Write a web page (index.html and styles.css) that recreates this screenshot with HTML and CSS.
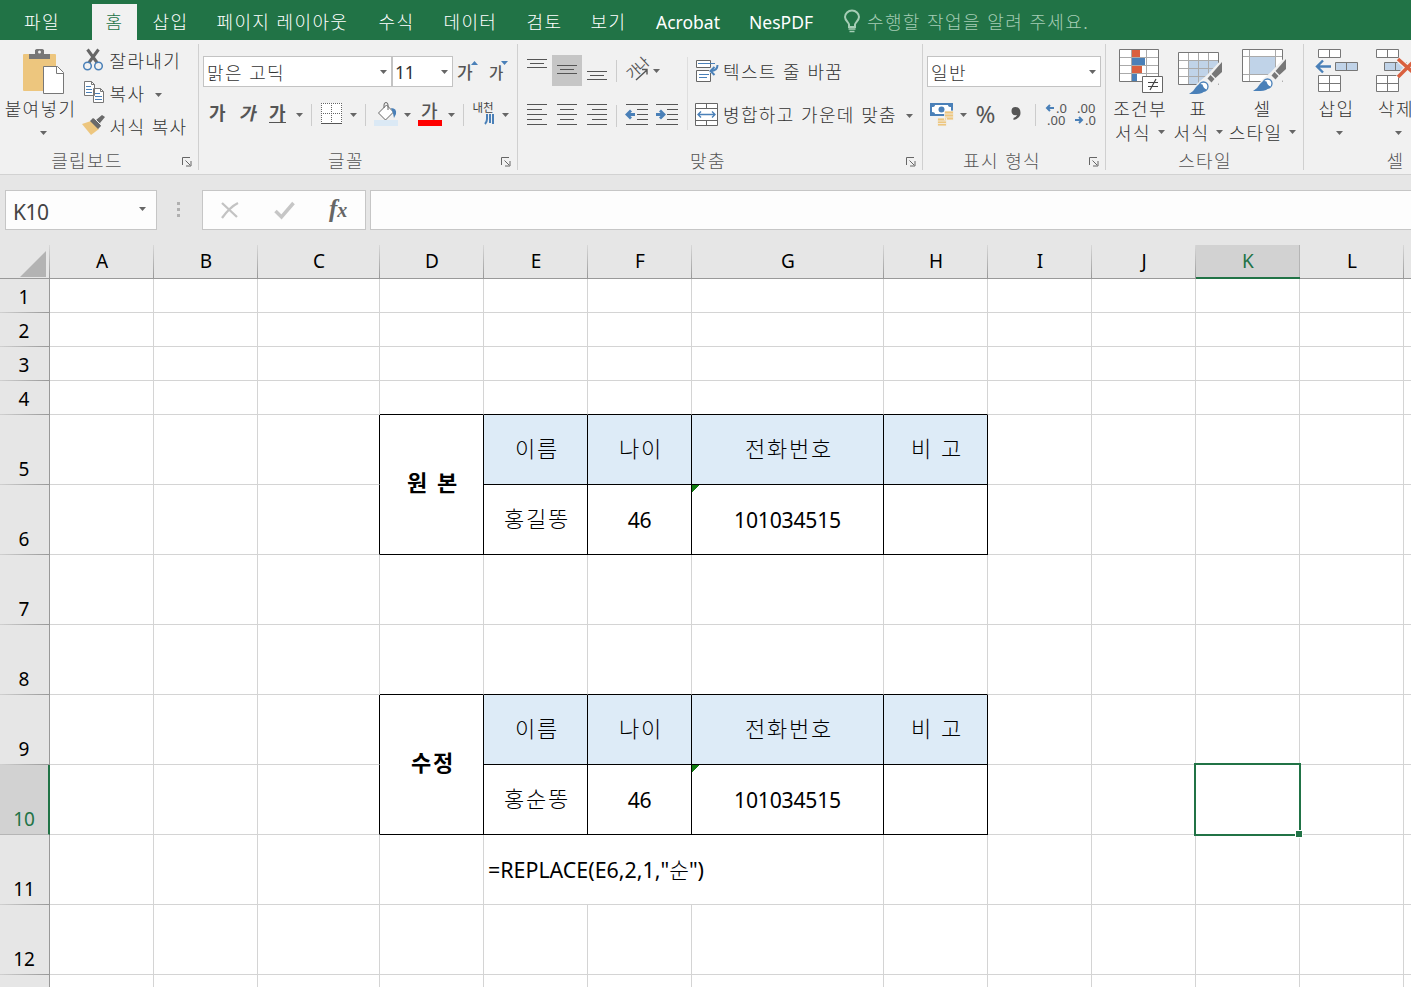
FILE: index.html
```html
<!DOCTYPE html>
<html lang="ko">
<head>
<meta charset="utf-8">
<title>Excel</title>
<link rel="stylesheet" href="styles.css">
</head>
<body>
<nav class="tabs">
  <span class="tab file">파일</span><span class="tab active">홈</span><span class="tab">삽입</span><span class="tab">페이지 레이아웃</span><span class="tab">수식</span><span class="tab">데이터</span><span class="tab">검토</span><span class="tab">보기</span><span class="tab latin">Acrobat</span><span class="tab latin">NesPDF</span>
  <span class="tell"><svg width="24" height="24" viewBox="843 10 24 24" fill="none" stroke="#a5cdb5" stroke-width="2"><path d="M849 28v-2.500c0-2-4-4-4-7.500a7 6.500 0 0 1 14 0c0 3.500-4 5.500-4 7.500v2.500z"/><path d="M848.500 30h7M849.500 32.500h5" stroke-width="1.600"/></svg>수행할 작업을 알려 주세요.</span>
</nav>

<div class="ribbon">
  <section class="group clipboard">
    <div class="body">
      <div class="big paste">
        <svg width="44" height="48" viewBox="22 48 44 48"><path fill="#edc67e" d="M23 55q0-1 1-1h31q1 0 1 1v36H24q-1 0-1-1z"/><path fill="#777" d="M29 54h6v-4l1.500-1h6l1.500 1v4h6v5H29z"/><circle cx="39.500" cy="52" r="1.500" fill="#f1f1f1"/><path fill="#fff" stroke="#777" d="M43.500 66.500h14l6 6v21h-20z"/><path fill="none" stroke="#777" d="M56.500 66.500v7h7"/></svg>
        <span>붙여넣기</span>
        <svg class="caret" width="7" height="4" viewBox="0 0 7 4"><path d="M0 0h7L3.500 4z"/></svg>
      </div>
      <div class="cmds">
        <div class="cmd"><svg width="26" height="24" viewBox="82 49 26 24" fill="none"><path stroke="#666" stroke-width="3" d="M87.500 50.500 97 63.500M98.500 50.500 89 63.500"/><g stroke="#4a80b8" stroke-width="1.500"><circle cx="87.500" cy="67" r="3.800"/><circle cx="98.500" cy="67" r="3.800"/></g></svg>잘라내기</div>
        <div class="cmd"><svg width="26" height="24" viewBox="82 82 26 24"><g fill="#fff" stroke="#777"><path d="M84.500 82.500h7l3 3v11h-10zM93.500 89.500h7l3 3v11h-10z"/><path d="M91.500 82.500v3h3M100.500 89.500v3h3" fill="none"/></g><path stroke="#4a80b8" d="M86 87.500h5M86 90.500h6M86 93.500h6M95 94.500h5M95 97.500h7M95 100.500h7"/></svg>복사<svg class="caret after" width="7" height="4" viewBox="0 0 7 4"><path d="M0 0h7L3.500 4z"/></svg></div>
        <div class="cmd"><svg width="26" height="24" viewBox="82 115 26 24"><path fill="#edc67e" d="m82 125 9-3 8 8-8 6z"/><path fill="#6a6a6a" d="m90 122 3-3 3 2 6-5 3 2-5 6 1 3-3 3z"/><path stroke="#f1f1f1" d="m95 120 6 6"/></svg>서식 복사</div>
      </div>
    </div>
    <footer>클립보드<svg class="launch" width="10" height="10" viewBox="0 0 10 10"><path d="M.5 8V.5H8M3.500 3.500 8 8M9 4v5H4"/></svg></footer>
  </section>

  <section class="group font">
    <div class="body rows">
      <div class="row">
        <div class="combo name">맑은 고딕<svg class="caret" width="7" height="4" viewBox="0 0 7 4"><path d="M0 0h7L3.500 4z"/></svg></div>
        <div class="combo size">11<svg class="caret" width="7" height="4" viewBox="0 0 7 4"><path d="M0 0h7L3.500 4z"/></svg></div>
        <svg width="62" height="32" viewBox="453 55 62 32"><g class="ga"><text x="457" y="79" font-size="17">가</text><text x="489" y="79" font-size="15.500">가</text></g><path fill="#4a80b8" d="m471 65 3.500-4 3.500 4zM501 61h7l-3.500 4z"/></svg>
      </div>
      <div class="row second">
        <svg width="107" height="30" viewBox="204 99 107 30"><g class="ga bold" font-size="18"><text x="209" y="120">가</text><text transform="translate(239 120) skewX(-12)">가</text><text x="269" y="120">가</text></g><path stroke="#555" d="M269 122.500h17"/><path fill="#666" d="M296 113h7l-3.500 4z"/></svg>
        <svg width="54" height="30" viewBox="311 99 54 30"><path stroke="#ccc" d="M311.500 104v22"/><path fill="#fff" d="M321 103h21v20h-21z"/><path stroke="#666" stroke-dasharray="1 1" fill="none" d="M321 103.500h21M321 113.500h21M321.500 103v20M331.500 103v20M341.500 103v20"/><path stroke="#555" d="M321 123.500h21"/><path fill="#666" d="M350 113h7l-3.500 4z"/></svg>
        <svg width="50" height="30" viewBox="365 99 50 30"><path stroke="#ccc" d="M365.500 104v22"/><path fill="#dbe9f5" d="M374 120h24v6h-24z"/><path d="m378.500 113 8-8 7 7-8 8z" fill="#fff" stroke="#666"/><path d="M384 108v-3q0-2.500 2-2.500t2 2.500v5" fill="none" stroke="#666"/><path fill="#4a80b8" d="M391 108q6 0 5 6l-2 4q-1-6-3-10z"/><path fill="#666" d="M404 113h7l-3.500 4z"/></svg>
        <svg width="48" height="30" viewBox="415 99 48 30"><text class="ga" font-size="18" x="421" y="118">가</text><path fill="#f00" d="M418 120h24v6h-24z"/><path fill="#666" d="M448 113h7l-3.500 4z"/></svg>
        <svg width="51" height="30" viewBox="463 99 51 30"><path stroke="#ccc" d="M463.500 104v22"/><text class="hanja" x="472.500" y="112">내천</text><path fill="none" stroke="#4a80b8" stroke-width="2" d="M487 114v5q0 3-2 5M490 114v9M493 114v10"/><path fill="#666" d="M502 113h7l-3.500 4z"/></svg>
      </div>
    </div>
    <footer>글꼴<svg class="launch" width="10" height="10" viewBox="0 0 10 10"><path d="M.5 8V.5H8M3.500 3.500 8 8M9 4v5H4"/></svg></footer>
  </section>

  <section class="group align">
    <div class="body split">
      <div class="rows alignicons">
        <div class="row">
          <svg width="30" height="32" viewBox="522 55 30 32" stroke="#555"><path d="M527 59.500h20M530 63.500h14M527 67.500h20"/></svg>
          <svg width="30" height="32" viewBox="552 55 30 32" stroke="#555"><path fill="#c6c6c6" stroke="none" d="M552 55h30v31h-30z"/><path d="M557 65.500h20M560 69.500h14M557 73.500h20"/></svg>
          <svg width="34" height="32" viewBox="582 55 34 32" stroke="#555"><path d="M587 71.500h20M590 75.500h14M587 79.500h20"/></svg>
          <svg width="52" height="32" viewBox="616 55 52 32"><path stroke="#ccc" d="M616.500 60v22"/><text class="slant" transform="translate(632 80) rotate(-42)" x="0" y="0">가나</text><path stroke="#555" fill="none" stroke-width="1.400" d="m636 80 11-10M642 69.500h5v5"/><path fill="#666" d="M653 69h7l-3.500 4z"/></svg>
        </div>
        <div class="row">
          <svg width="30" height="30" viewBox="522 99 30 30" stroke="#555"><path d="M527 104.500h20M527 109.500h15M527 114.500h20M527 119.500h15M527 124.500h20"/></svg>
          <svg width="30" height="30" viewBox="552 99 30 30" stroke="#555"><path d="M557 104.500h20M560 109.500h14M557 114.500h20M560 119.500h14M557 124.500h20"/></svg>
          <svg width="34" height="30" viewBox="582 99 34 30" stroke="#555"><path d="M587 104.500h20M592 109.500h15M587 114.500h20M592 119.500h15M587 124.500h20"/></svg>
          <svg width="36" height="30" viewBox="616 99 36 30" stroke="#555"><path stroke="#ccc" d="M616.500 105v22"/><path d="M626 104.500h22M637 109.500h11M637 114.500h11M637 119.500h11M626 124.500h22"/><path d="M635 114.500h-8m4-4-4 4 4 4" fill="none" stroke="#4a80b8" stroke-width="2.800"/></svg>
          <svg width="30" height="30" viewBox="652 99 30 30" stroke="#555"><path d="M656 104.500h22M667 109.500h11M667 114.500h11M667 119.500h11M656 124.500h22"/><path d="M656 114.500h8m-4-4 4 4-4 4" fill="none" stroke="#4a80b8" stroke-width="2.800"/></svg>
        </div>
      </div>
      <div class="rows wrapcol">
        <div class="row text"><svg width="28" height="32" viewBox="695 55 28 32"><g fill="#fff" stroke="#666"><path d="M696.500 60.500h14v7h-14zM696.500 70.500h14v11h-14z"/></g><path d="M698 63.500h17M699 74.500h10M699 77.500h8" stroke="#4a80b8"/><path fill="#f1f1f1" d="M709 68h4v5h-4z"/><path d="M717.500 65q0 6-7 6m4-4-4 4 4 4" fill="none" stroke="#4a80b8" stroke-width="2"/></svg>텍스트 줄 바꿈</div>
        <div class="row text"><svg width="28" height="30" viewBox="695 99 28 30"><path fill="#fff" stroke="#666" d="M695.500 103.500h22v22h-22zM695.500 108.500h22M695.500 120.500h22M706.500 103.500v5M706.500 120.500v5"/><path d="M698 114.500h17m-14-3-3 3 3 3m11-6 3 3-3 3" fill="none" stroke="#4a80b8" stroke-width="1.400"/></svg>병합하고 가운데 맞춤<svg class="caret mergecaret" width="7" height="4" viewBox="0 0 7 4"><path d="M0 0h7L3.500 4z"/></svg></div>
      </div>
    </div>
    <footer>맞춤<svg class="launch" width="10" height="10" viewBox="0 0 10 10"><path d="M.5 8V.5H8M3.500 3.500 8 8M9 4v5H4"/></svg></footer>
  </section>

  <section class="group number">
    <div class="body rows">
      <div class="row"><div class="combo fmt">일반<svg class="caret" width="7" height="4" viewBox="0 0 7 4"><path d="M0 0h7L3.500 4z"/></svg></div></div>
      <div class="row">
        <svg width="46" height="30" viewBox="927 99 46 30"><path fill="#4a80b8" d="M930 103h23v13h-23z"/><path fill="#fff" d="M935 105h13q0 2 3 2v5q-3 0-3 2h-13q0-2-3-2v-5q3 0 3-2z"/><circle cx="941.500" cy="109.500" r="3" fill="#4a80b8"/><g fill="#edc67e" stroke="#f1f1f1" stroke-width=".8"><path d="M944.500 111h9v9h-9zM937.500 118h9v8h-9z"/><path d="M945 114h8M945 117h8M938 121h8M938 123.500h8"/></g><path fill="#666" d="M960 113h7l-3.500 4z"/></svg>
        <svg width="62" height="30" viewBox="973 99 62 30"><text class="pct" x="975.500" y="123">%</text><path fill="#555" d="M1011.500 111a4 4 0 0 1 4-4q5 0 5 6 0 5-7 7v-2q3-1 3.500-3-5.500 1-5.500-4z"/></svg>
        <svg width="36" height="30" viewBox="1035 99 36 30"><path stroke="#ccc" d="M1035.500 104v22"/><text class="dec" x="1056" y="112.500">.0</text><text class="dec" x="1047" y="124.500">.00</text><path d="M1054 108h-7m3-3-3 3 3 3" fill="none" stroke="#4a80b8" stroke-width="2"/></svg>
        <svg width="30" height="30" viewBox="1071 99 30 30"><text class="dec" x="1077" y="112.500">.00</text><text class="dec" x="1085" y="124.500">.0</text><path d="M1075 120h7m-3-3 3 3-3 3" fill="none" stroke="#4a80b8" stroke-width="2"/></svg>
      </div>
    </div>
    <footer>표시 형식<svg class="launch" width="10" height="10" viewBox="0 0 10 10"><path d="M.5 8V.5H8M3.500 3.500 8 8M9 4v5H4"/></svg></footer>
  </section>

  <section class="group styles">
    <div class="body">
      <div class="big cond">
        <svg width="46" height="48" viewBox="1118 48 46 48"><path fill="#fff" stroke="#777" d="M1119.500 49.500h39v32h-39z"/><path stroke="#aaa" d="M1120 57.500h38M1120 65.500h38M1120 73.500h38M1131.500 50v31M1146.500 50v31"/><path fill="#d9603f" d="M1132 50h8v7h-8zM1132 66h10v7h-10z"/><path fill="#4a80b8" d="M1132 58h13v7h-13zM1132 74h5v7h-5z"/><path fill="#fff" stroke="#666" d="M1142.500 76.500h20v16h-20z"/><path stroke="#444" stroke-width="1.200" d="M1148 82.500h10M1148 86.500h10M1156 79l-6 11"/></svg>
        <span>조건부</span><span>서식<svg class="caret after" width="7" height="4" viewBox="0 0 7 4"><path d="M0 0h7L3.500 4z"/></svg></span>
      </div>
      <div class="big tbl">
        <svg width="48" height="48" viewBox="1175 48 48 48"><path fill="#fff" stroke="#777" d="M1178.500 52.500h40v32h-40z"/><path fill="#c0d3e8" d="M1188 60h30v24h-30z"/><path stroke="#aaa" d="M1179 60.500h39M1179 68.500h39M1179 76.500h39M1188.500 53v31M1198.500 53v31M1208.500 53v31"/><path fill="#f1f1f1" d="m1222 59-15 16-7 6-8 8v4h22l10-20z"/><path fill="#777" d="M1222 62v10l-6.500 6-4-4zM1210.500 75l4 4-3 3.500-4-4z"/><circle cx="1203.500" cy="86.500" r="4.500" fill="#fff" stroke="#4a80b8" stroke-width="1.300"/><path fill="#4a80b8" d="M1189 94q5-3 7-7 3-4 6.500-2.500 1 4 4 5-4 4.500-10 4.500z"/></svg>
        <span>표</span><span>서식<svg class="caret after" width="7" height="4" viewBox="0 0 7 4"><path d="M0 0h7L3.500 4z"/></svg></span>
      </div>
      <div class="big cellst">
        <svg width="48" height="48" viewBox="1239 48 48 48"><path fill="#fff" stroke="#777" d="M1242.500 49.500h40v32h-40z"/><path fill="#c0d3e8" d="M1250 57h26v17h-26z"/><path fill="none" stroke="#aaa" d="M1243 56.500h39M1243 74.500h39M1249.500 50v31M1275.500 50v31"/><path fill="#f1f1f1" d="m1286 56-15 16-7 6-8 8v4h22l10-20z"/><path fill="#777" d="M1286 59v10l-6.500 6-4-4zM1274.500 72l4 4-3 3.500-4-4z"/><circle cx="1267.500" cy="83.500" r="4.500" fill="#fff" stroke="#4a80b8" stroke-width="1.300"/><path fill="#4a80b8" d="M1253 91q5-3 7-7 3-4 6.500-2.500 1 4 4 5-4 4.500-10 4.500z"/></svg>
        <span>셀</span><span>스타일<svg class="caret after" width="7" height="4" viewBox="0 0 7 4"><path d="M0 0h7L3.500 4z"/></svg></span>
      </div>
    </div>
    <footer class="plain">스타일</footer>
  </section>

  <section class="group cells">
    <div class="body">
      <div class="big ins">
        <svg width="46" height="48" viewBox="1314 48 46 48"><g fill="#fff" stroke="#777"><path d="M1318.500 49.500h22v8h-22zM1329.500 49.500v8M1318.500 75.500h22v16h-22zM1329.500 75.500v16M1318.500 83.500h22"/><path fill="#c0d3e8" d="M1335.500 62.500h22v8h-22zM1346.500 62.500v8"/></g><path fill="none" stroke="#4a80b8" stroke-width="2.400" d="M1331 66.500h-14m6-6-6 6 6 6"/></svg>
        <span>삽입</span><svg class="caret" width="7" height="4" viewBox="0 0 7 4"><path d="M0 0h7L3.500 4z"/></svg>
      </div>
      <div class="big del">
        <svg width="46" height="48" viewBox="1374 48 46 48"><g fill="#fff" stroke="#777"><path d="M1376.500 49.500h22v8h-22zM1387.500 49.500v8M1376.500 75.500h22v16h-22zM1387.500 75.500v16M1376.500 83.500h22"/><path fill="#c0d3e8" d="M1384.500 62.500h22v8h-22zM1395.500 62.500v8"/></g><path stroke="#f1f1f1" stroke-width="6" d="m1398 59 18 16M1416 59l-18 18"/><path stroke="#d9603f" stroke-width="3.500" d="m1398 59 18 16M1416 59l-18 18"/></svg>
        <span>삭제</span><svg class="caret" width="7" height="4" viewBox="0 0 7 4"><path d="M0 0h7L3.500 4z"/></svg>
      </div>
    </div>
    <footer class="plain">셀</footer>
  </section>
</div>

<div class="formulabar">
  <div class="namebox">K10<svg class="caret" width="7" height="4" viewBox="0 0 7 4"><path d="M0 0h7L3.500 4z"/></svg></div>
  <div class="dots"><i></i><i></i><i></i></div>
  <div class="fxbox">
    <svg width="70" height="38" viewBox="203 191 70 38"><path fill="none" stroke="#c3c3c3" stroke-width="2.300" d="m222 203 15 14M238 203q-8 4-16 15"/></svg>
    <svg width="50" height="38" viewBox="273 191 50 38"><path fill="none" stroke="#c6c6c6" stroke-width="3.500" d="m275.500 211 6 6 12-14"/></svg>
    <span class="fx">f<small>x</small></span>
  </div>
  <div class="input"></div>
</div>

<table class="sheet">
  <colgroup><col class="c-head"><col class="c-n"><col class="c-n"><col class="c-c"><col class="c-n"><col class="c-n"><col class="c-n"><col class="c-g"><col class="c-n"><col class="c-n"><col class="c-n"><col class="c-n"><col class="c-n"><col class="c-last"></colgroup>
  <tr class="head"><th class="corner"><svg width="26" height="26" viewBox="0 0 26 26"><path fill="#b3b3b3" d="M26 0v26H0z"/></svg></th><th>A</th><th>B</th><th>C</th><th>D</th><th>E</th><th>F</th><th>G</th><th>H</th><th>I</th><th>J</th><th class="sel">K</th><th>L</th><th class="edge"></th></tr>
  <tr class="s"><th>1</th><td></td><td></td><td></td><td></td><td></td><td></td><td></td><td></td><td></td><td></td><td></td><td></td><td class="edge"></td></tr>
  <tr class="s"><th>2</th><td></td><td></td><td></td><td></td><td></td><td></td><td></td><td></td><td></td><td></td><td></td><td></td><td class="edge"></td></tr>
  <tr class="s"><th>3</th><td></td><td></td><td></td><td></td><td></td><td></td><td></td><td></td><td></td><td></td><td></td><td></td><td class="edge"></td></tr>
  <tr class="s"><th>4</th><td></td><td></td><td></td><td class="bb"></td><td class="bb"></td><td class="bb"></td><td class="bb"></td><td class="bb"></td><td></td><td></td><td></td><td></td><td class="edge"></td></tr>
  <tr><th>5</th><td></td><td></td><td class="br"></td><td class="box title" rowspan="2">원 본</td><td class="box hd">이름</td><td class="box hd">나이</td><td class="box hd">전화번호</td><td class="box hd">비 고</td><td></td><td></td><td></td><td></td><td class="edge"></td></tr>
  <tr><th>6</th><td></td><td></td><td class="br"></td><td class="box">홍길똥</td><td class="box num">46</td><td class="box num err">101034515</td><td class="box"></td><td></td><td></td><td></td><td></td><td class="edge"></td></tr>
  <tr><th>7</th><td></td><td></td><td></td><td></td><td></td><td></td><td></td><td></td><td></td><td></td><td></td><td></td><td class="edge"></td></tr>
  <tr><th>8</th><td></td><td></td><td></td><td class="bb"></td><td class="bb"></td><td class="bb"></td><td class="bb"></td><td class="bb"></td><td></td><td></td><td></td><td></td><td class="edge"></td></tr>
  <tr><th>9</th><td></td><td></td><td class="br"></td><td class="box title" rowspan="2">수정</td><td class="box hd">이름</td><td class="box hd">나이</td><td class="box hd">전화번호</td><td class="box hd">비 고</td><td></td><td></td><td></td><td></td><td class="edge"></td></tr>
  <tr><th class="sel">10</th><td></td><td></td><td class="br"></td><td class="box">홍순똥</td><td class="box num">46</td><td class="box num err">101034515</td><td class="box"></td><td></td><td></td><td class="cursor"><div class="ring"><i></i></div></td><td></td><td class="edge"></td></tr>
  <tr><th>11</th><td></td><td></td><td></td><td></td><td class="formula" colspan="3">=REPLACE(E6,2,1,"<span>순</span>")</td><td></td><td></td><td></td><td></td><td></td><td class="edge"></td></tr>
  <tr><th>12</th><td></td><td></td><td></td><td></td><td></td><td></td><td></td><td></td><td></td><td></td><td></td><td></td><td class="edge"></td></tr>
  <tr class="last"><th></th><td></td><td></td><td></td><td></td><td></td><td></td><td></td><td></td><td></td><td></td><td></td><td></td><td class="edge"></td></tr>
</table>
</body>
</html>
```
FILE: styles.css
```css
* { box-sizing: border-box; }
html, body { height: 987px; overflow: hidden; }
body {
  margin: 0;
  width: 1411px;
  background: #fff;
  color: #333;
  font: 300 18px/24px "Noto Sans CJK KR", sans-serif;
  letter-spacing: 1.35px;
  white-space: nowrap;
}
svg { display: block; flex: none; overflow: visible; }

/* Tabs */
.tabs {
  display: grid;
  grid-template-columns: 92px 45px 64px 162px 65px 83px 64px 65px 93px 95px auto;
  height: 40px;
  padding-top: 4px;
  background: #217346;
  color: #fff;
}
.tab { padding: 5px 0 0 15.5px; height: 36px; }
.tab.file { padding-left: 24px; }
.tab.active { padding-left: 13.5px; background: #f1f1f1; color: #217346; }
.tab.latin { padding-left: 16px; font: 400 17.5px/26px "Noto Sans", sans-serif; letter-spacing: 0; }
.tell { display: flex; padding: 5px 0 0 15px; color: #a5cdb5; }

/* Ribbon */
.ribbon {
  display: flex;
  height: 135px;
  background: #f1f1f1;
  border-bottom: 1px solid #d2d2d2;
  overflow: hidden;
}
.group { position: relative; flex: none; display: flex; flex-direction: column; }
.group::after { content: ""; position: absolute; right: 0; top: 4px; height: 126px; width: 1px; background: #d0d0d0; }
.clipboard { width: 199px; }
.font { width: 319px; }
.align { width: 405px; }
.number { width: 183px; }
.styles { width: 198px; }
.cells { width: 183px; }
.body { display: flex; height: 108px; }
.group footer { display: flex; justify-content: center; position: relative; padding-right: 25px; color: #555; }
.group footer.plain { padding-right: 0; }
.launch { position: absolute; right: 7px; top: 9px; fill: none; stroke: #666; }
.caret { fill: #666; }
.caret.after { margin-left: 7px; }

.big { display: flex; flex-direction: column; align-items: center; padding-top: 8px; }
.big span { display: flex; align-items: center; height: 24px; margin-right: 1px; }
.big > .caret { margin: 11px 0 0 4px; }
.paste { width: 80px; padding-left: 2px; }
.paste > svg:first-child { margin-left: 5px; }
.cmds { padding-top: 8px; }
.cmd { display: flex; align-items: center; height: 33px; padding: 0 0 9px 2px; gap: 1.5px; }
.cmd .caret { margin-top: 3px; }
.cmd .after { margin-left: 8px; }

.rows { display: flex; flex-direction: column; gap: 12px; padding: 15px 0 0 4px; }
.row { display: flex; height: 32px; }
.row + .row { height: 30px; }
.row.second { margin-left: 1px; }
.combo {
  display: flex;
  align-items: center;
  justify-content: space-between;
  height: 31px;
  margin-top: 1px;
  padding: 0 4px 0 3px;
  border: 1px solid #c3c3c3;
  background: #fff;
}
.combo.name { width: 189px; }
.combo.size { width: 61px; font: 400 17.5px/24px "Noto Sans", sans-serif; letter-spacing: -.2px; padding-left: 2px; }
.combo.fmt { width: 174px; }
.ga { fill: #555; font-weight: 500; letter-spacing: 0; }
.ga.bold { font-weight: 700; }
.hanja { fill: #444; font-size: 11.5px; font-weight: 400; letter-spacing: 0; }
.slant { fill: #555; font-size: 14px; font-weight: 400; letter-spacing: -1px; }
.pct { fill: #555; font: 400 24px "Noto Sans", sans-serif; letter-spacing: 0; }
.dec { fill: #555; font: 400 13px/1 "Noto Sans", sans-serif; letter-spacing: 0; }
.split .alignicons { width: 170px; }
.wrapcol { position: relative; padding-left: 7px; }
.wrapcol::before { content: ""; position: absolute; left: -1px; top: 17px; width: 1px; height: 73px; background: #dedede; }
.row.text { align-items: center; }
.mergecaret { margin: 4px 0 0 9px; }

.styles .body { padding-left: 3px; }
.cond { width: 61px; padding-left: 2px; }
.tbl { width: 58px; }
.cellst { width: 70px; }
.ins { width: 66px; }
.del { width: 53px; }

/* Formula bar */
.formulabar { display: flex; height: 70px; padding: 15px 0 0 5px; background: #e6e6e6; }
.formulabar > div { height: 40px; }
.namebox {
  display: flex;
  align-items: center;
  justify-content: space-between;
  width: 152px;
  padding: 3px 10px 0 7px;
  border: 1px solid #c6c6c6;
  background: #fdfdfd;
  color: #444;
  font: 400 21px/30px "Noto Sans", sans-serif;
  letter-spacing: -.5px;
}
.namebox .caret { margin-bottom: 6px; }
.dots { display: flex; flex-direction: column; gap: 3px; width: 45px; padding: 12px 0 0 20px; }
.dots i { width: 3px; height: 3px; background: #b0b0b0; }
.fxbox { display: flex; width: 164px; border: 1px solid #c6c6c6; background: #fdfdfd; }
.fx { padding-left: 6px; color: #666; font: italic 700 25px/36px "Liberation Serif", serif; letter-spacing: 0; }
.fx small { font-size: 20px; }
.input { flex: 1; margin-left: 4px; border: 1px solid #c6c6c6; border-right: 0; background: #fdfdfd; }

/* Sheet */
.sheet { table-layout: fixed; width: 1411px; border-spacing: 0; color: #000; letter-spacing: 1.8px; }
.c-head { width: 50px; }
.c-n { width: 104px; }
.c-c { width: 122px; }
.c-g { width: 192px; }
.c-last { width: 7px; }
.sheet tr { height: 70px; }
.sheet tr.s, .sheet tr.head { height: 34px; }
.sheet tr.last { height: 12px; }
.sheet td {
  padding: 0 0 5px 3px;
  border: solid #d4d4d4;
  border-width: 0 1px 1px 0;
  text-align: center;
  font-size: 22px;
  line-height: 30px;
}
.sheet .s td, .sheet .last td { padding: 0; }
.sheet th {
  padding: 0 1px 2px 0;
  background: linear-gradient(to right, #d0d0d0, #999) bottom / 100% 1px no-repeat #e6e6e6;
  border-right: 1px solid #999;
  vertical-align: bottom;
  font: 400 19px/27px "Noto Sans", sans-serif;
  letter-spacing: 0;
}
.sheet .last th, .sheet .last td { border-bottom: 0; background-image: none; padding: 0; line-height: 0; }
.sheet .head th {
  padding: 0;
  vertical-align: middle;
  border: 0;
  border-bottom: 1px solid #999;
  background: linear-gradient(#d8d8d8, #999) right / 1px 100% no-repeat #e6e6e6;
}
.sheet .head .corner svg { margin: 4px 0 0 20px; }
.sheet th.sel { padding: 0 0 1px; background: #d2d2d2; color: #217346; border-right: 2px solid #217346; border-bottom: 1px solid #b5b5b5; }
.sheet .head th.sel { padding: 1px 0 0; background: linear-gradient(#b5b5b5, #b5b5b5) right / 1px 100% no-repeat #d2d2d2; border-right: 0; border-bottom: 2px solid #217346; }
.sheet td.bb { border-bottom-color: #000; }
.sheet td.br { border-right-color: #000; }
.sheet td.box { border-color: #000; }
.sheet td.hd { background: #ddebf7; }
.sheet td.title { padding-bottom: 7px; font-weight: 700; }
.sheet td.num { padding: 1px 0 0; font: 400 21.2px/30px "Noto Sans", sans-serif; letter-spacing: -.25px; }
.sheet td.err { background: linear-gradient(135deg, #107c10 5px, transparent 5px) no-repeat; }
.sheet td.formula { padding: 0 0 0 4px; text-align: left; font: 400 21.4px/30px "Noto Sans", "Noto Sans CJK KR", sans-serif; letter-spacing: 0; }
.formula span { font-weight: 300; }
.sheet .head th.edge { background-image: none; }
.sheet td.edge { border-right: 0; padding: 0; }
.cursor { position: relative; }
.ring { position: absolute; left: -2px; top: -2px; width: 107px; height: 73px; border: 2px solid #217346; }
.ring i { position: absolute; right: -4px; bottom: -4px; width: 8px; height: 8px; background: #217346; border: 1px solid #fff; }
```
